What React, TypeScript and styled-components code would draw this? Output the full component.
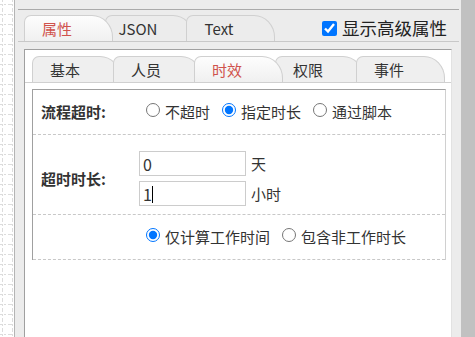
import React from 'react'
import styled, { createGlobalStyle } from 'styled-components'

const FONT = `"Noto Sans CJK SC", "Microsoft YaHei", sans-serif`

const GlobalStyle = createGlobalStyle`
    html, body {
        margin: 0;
        padding: 0;
        height: 337px;
        overflow: hidden;
        background: #fff;
    }
    #root {
        height: 100%;
    }
`

const Page = styled.div`
    display: flex;
    height: 337px;
    font-family: ${FONT};
    color: #333;
`
const Canvas = styled.div`
    width: 14px;
    flex-shrink: 0;
    background: #fff;
    svg {
        display: block;
    }
`
const Panel = styled.div`
    flex: 1;
    display: flex;
    flex-direction: column;
    border-left: 1px solid #b4b4b4;
    background: #ececec;
    padding: 9px 2px 0 3px;
`
const Scrollbar = styled.div`
    width: 14px;
    flex-shrink: 0;
    background: #c1c1c1;
`
const Content = styled.div`
    flex: 1;
    display: flex;
    flex-direction: column;
    border-top: 1px solid #aaa;
`
const TabStrip = styled.div<{ $inner?: boolean }>`
    display: flex;
    align-items: flex-end;
    padding: ${p => (p.$inner ? '6px 0 0 7px' : '5px 0 0 6px')};
    border-bottom: 1px solid ${p => (p.$inner ? '#d0d0d0' : '#c8c8c8')};
`
const Tab = styled.div<{ $active?: boolean; $inner?: boolean }>`
    position: relative;
    z-index: ${p => (p.$active ? 2 : 1)};
    box-sizing: border-box;
    width: 89px;
    height: 26px;
    margin-left: -8px;
    padding-right: 23px;
    display: flex;
    align-items: center;
    justify-content: center;
    font-size: 15px;
    line-height: 1;
    color: ${p => (p.$active ? '#d0524c' : '#333')};
    border: 1px solid #d0d0d0;
    border-bottom: none;
    border-radius: 7px 21px 0 0 / 7px 22px 0 0;
    background: ${p =>
        p.$active
            ? 'linear-gradient(#fdfdfd, #f0f0f0)'
            : p.$inner
            ? '#efefef'
            : '#ececec'};
    &:first-child {
        margin-left: 0;
    }
`
const AdvancedToggle = styled.label`
    margin-left: auto;
    margin-right: 12px;
    align-self: center;
    display: flex;
    align-items: center;
    gap: 5px;
    font-size: 17.5px;
    line-height: 1;
    color: #222;
    input {
        width: 15px;
        height: 15px;
        margin: 0;
    }
`
const Sheet = styled.div`
    flex: 1;
    margin: 7px 7px 0 6px;
    background: #fff;
    border: 1px solid #a0a0a0;
    border-right-color: #e2e2e2;
    border-bottom: none;
`
const Form = styled.div`
    margin: 6px 5px 0 7px;
    border-top: 1px solid #a0a0a0;
    border-left: 1px solid #a0a0a0;
    border-right: 1px solid #d0d0d0;
`
const Row = styled.div<{ $pad: string }>`
    display: grid;
    grid-template-columns: 106px 1fr;
    align-items: center;
    padding: ${p => p.$pad};
    border-bottom: 1px dashed #c8c8c8;
`
const Label = styled.div`
    padding-left: 8px;
    font-size: 15px;
    font-weight: bold;
    line-height: 20px;
    color: #333;
`
const Options = styled.div`
    display: flex;
    align-items: center;
    padding-left: 7px;
`
const Option = styled.label`
    display: flex;
    align-items: center;
    margin-right: 12px;
    font-size: 15px;
    line-height: 20px;
    color: #333;
    input {
        width: 14px;
        height: 14px;
        margin: -4px 5px 0 0;
    }
`
const Fields = styled.div`
    display: flex;
    flex-direction: column;
    gap: 5px;
`
const Field = styled.div`
    display: flex;
    align-items: center;
    gap: 5px;
    font-size: 15px;
    color: #333;
`
const InputWrap = styled.div`
    position: relative;
    display: flex;
`
const TextInput = styled.input`
    box-sizing: border-box;
    width: 107px;
    height: 25px;
    padding: 0 3px;
    border: 1px solid #ccc;
    font-family: ${FONT};
    font-size: 16px;
    color: #333;
    &:focus {
        outline: none;
    }
`
// the text caret shown in the focused field
const Caret = styled.span`
    position: absolute;
    left: 13px;
    top: 5px;
    width: 1px;
    height: 17px;
    background: #000;
`

const outerTabs = ['属性', 'JSON', 'Text']
const innerTabs = ['基本', '人员', '时效', '权限', '事件']

const App = () => {
    return (
        <>
            <GlobalStyle />
            <Page>
                <Canvas>
                    <svg width="14" height="337">
                        <defs>
                            <pattern id="grid" width="10" height="10" patternUnits="userSpaceOnUse">
                                <line x1="2.5" y1="0" x2="2.5" y2="10" stroke="#dcdcdc" strokeDasharray="2 2" />
                                <line x1="0" y1="4.5" x2="10" y2="4.5" stroke="#dcdcdc" strokeDasharray="2 2" />
                            </pattern>
                        </defs>
                        <rect width="14" height="337" fill="url(#grid)" />
                    </svg>
                </Canvas>
                <Panel>
                    <Content>
                        <TabStrip>
                            {outerTabs.map((t, i) =>
                                <Tab key={t} $active={i === 0}>{t}</Tab>
                            )}
                            <AdvancedToggle>
                                <input type="checkbox" defaultChecked />
                                显示高级属性
                            </AdvancedToggle>
                        </TabStrip>
                        <Sheet>
                            <TabStrip $inner>
                                {innerTabs.map((t, i) =>
                                    <Tab key={t} $inner $active={i === 2}>{t}</Tab>
                                )}
                            </TabStrip>
                            <Form>
                                <Row $pad="12px 0 12px">
                                    <Label>流程超时:</Label>
                                    <Options>
                                        <Option><input type="radio" name="mode" />不超时</Option>
                                        <Option><input type="radio" name="mode" defaultChecked />指定时长</Option>
                                        <Option><input type="radio" name="mode" />通过脚本</Option>
                                    </Options>
                                </Row>
                                <Row $pad="16px 0 8px">
                                    <Label>超时时长:</Label>
                                    <Fields>
                                        <Field>
                                            <TextInput defaultValue="0" />
                                            天
                                        </Field>
                                        <Field>
                                            <InputWrap>
                                                <TextInput defaultValue="1" />
                                                <Caret />
                                            </InputWrap>
                                            小时
                                        </Field>
                                    </Fields>
                                </Row>
                                <Row $pad="12px 0 12px">
                                    <Label />
                                    <Options>
                                        <Option><input type="radio" name="calc" defaultChecked />仅计算工作时间</Option>
                                        <Option><input type="radio" name="calc" />包含非工作时长</Option>
                                    </Options>
                                </Row>
                            </Form>
                        </Sheet>
                    </Content>
                </Panel>
                <Scrollbar />
            </Page>
        </>
    )
}

export default App
